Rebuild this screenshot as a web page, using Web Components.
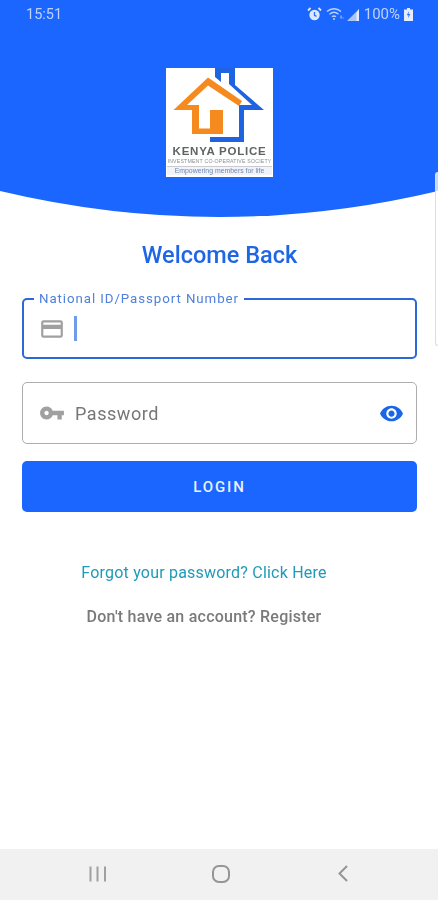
<!DOCTYPE html>
<html lang="en">
<head>
<meta charset="utf-8">
<title>Kenya Police Sacco</title>
<style>
html,body{margin:0;padding:0;background:#fff;font-family:Roboto,"Liberation Sans",sans-serif;}
</style>
</head>
<body>
<login-app>
  <status-bar slot="status"></status-bar>
</login-app>

<script>
const P={
 card:"M20 4H4c-1.11 0-1.99.89-1.99 2L2 18c0 1.11.89 2 2 2h16c1.11 0 2-.89 2-2V6c0-1.11-.89-2-2-2zm0 14H4v-6h16v6zm0-10H4V6h16v2z",
 key:"M12.65 10C11.83 7.67 9.61 6 7 6c-3.31 0-6 2.69-6 6s2.69 6 6 6c2.61 0 4.83-1.67 5.65-4H17v4h4v-4h2v-4H12.65zM7 14c-1.1 0-2-.9-2-2s.9-2 2-2 2 .9 2 2-.9 2-2 2z",
 eye:"M12 4.5C7 4.5 2.73 7.61 1 12c1.73 4.39 6 7.5 11 7.5s9.27-3.11 11-7.5c-1.73-4.39-6-7.5-11-7.5zM12 17c-2.76 0-5-2.24-5-5s2.24-5 5-5 5 2.24 5 5-2.24 5-5 5zm0-8c-1.66 0-3 1.34-3 3s1.34 3 3 3 3-1.34 3-3-1.34-3-3-3z"
};
function def(name,html,init){
  customElements.define(name,class extends HTMLElement{
    constructor(){super();this.attachShadow({mode:"open"}).innerHTML=typeof html==="function"?html(this):html;}
    connectedCallback(){init&&init(this);}
  });
}

def("status-bar",`<style>
:host{display:flex;align-items:center;height:28px;padding:0 25px 0 26px;color:#bdd3fb;font:400 15px Roboto,sans-serif;filter:blur(.45px)}
.t{flex:1;font-size:14.5px}
.i{display:flex;align-items:center}
svg{display:block}
</style>
<span class="t">15:51</span>
<span class="i">
<svg width="15" height="15" viewBox="0 0 15 15" style="margin-right:4px"><circle cx="7.5" cy="8" r="5.2" fill="#dbe7fd"/><path d="M7.5 5v3.3l2 1" stroke="#2a70f5" stroke-width="1.3" fill="none"/><path d="M1 3.5 3.5 1M14 3.5 11.500 1" stroke="#dbe7fd" stroke-width="1.8"/></svg>
<svg width="18" height="14" viewBox="0 0 18 14" style="margin-right:2px" fill="none" stroke="#bdd3fb" stroke-width="1.4"><path d="M1 4.500C5 .8 11 .8 15 4.500M3.500 7.200C6.200 4.800 9.800 4.800 12.500 7.200M6 9.800C7.400 8.700 8.600 8.700 10 9.800"/><circle cx="8" cy="12" r="1" fill="#bdd3fb" stroke="none"/><path d="M15 8.500v3M17 10.500v1" stroke-width="1"/></svg>
<svg width="13" height="13" viewBox="0 0 13 13" style="margin-right:5px"><path d="M13 1V13H1Z" fill="#a9c5fa"/><path d="M10.500 5V13H13V1Z" fill="#e4edff"/></svg>
<span style="margin-right:4px">100%</span>
<svg width="9" height="13" viewBox="0 0 9 13"><path d="M3 0h3v1.500h3V13H0V1.500h3Z" fill="#e4edff"/><path d="M5 3 2.800 7.300h1.700L4 10.500l2.300-4.500H4.600Z" fill="#2a70f5"/></svg>
</span>`);

def("kp-logo",`<style>
:host{display:block;width:107px;height:109px;background:#fff;color:#666;font-family:"Liberation Sans",Arial,sans-serif;text-align:center;overflow:hidden}
svg{display:block}
.a{font:700 11.5px/9px "Liberation Sans",Arial,sans-serif;letter-spacing:.75px;margin-top:4px;color:#5f6364;white-space:nowrap}
.b{font:400 5.200px/6px "Liberation Sans",Arial,sans-serif;color:#8a8d90;margin-top:2px;letter-spacing:.2px;white-space:nowrap}
.c{font:400 6.900px/8px "Liberation Sans",Arial,sans-serif;color:#6c86b4;margin:2px 1px 0;border-top:1px solid #c9cbd0;background:#f1f3f8;white-space:nowrap}
.w{filter:blur(.5px)}
</style>
<div class="w">
<svg width="107" height="75" viewBox="0 0 107 75">
<path fill="#1f63e0" d="M49 0H69V17L98 42H78V74H44V69H73V37H86L63 16V5H55V14L49 9Z"/>
<path fill="#f58a1f" d="M42 9.500 76 33 73 38 42 17.500 21 37H33V60.500H44V42H57V66H26V42H7.500Z"/>
</svg>
<div class="a">KENYA POLICE</div>
<div class="b">INVESTMENT CO-OPERATIVE SOCIETY</div>
<div class="c">Empowering members for life</div>
</div>`);

def("app-header",`<style>
:host{display:block;height:217px;background:#1a66ff;clip-path:path("M0 0H438V191Q219 243 0 191Z")}
.logo{display:flex;justify-content:center;padding:40px 0 0 1px}
</style>
<slot name="status"></slot>
<div class="logo"><kp-logo></kp-logo></div>`);

def("text-field",(el)=>`<style>
:host{display:flex;align-items:center;box-sizing:border-box;height:62px;position:relative;border-radius:5px;background:#fff;padding:0 12px 0 16px;
 border:1.5px solid #adadad}
:host([focused]){border:2px solid #2a6ad8;height:61px;padding-left:15px}
.label{position:absolute;left:10px;top:-9px;padding:0 5px;background:#fff;font:400 13.300px/16px Roboto,sans-serif;letter-spacing:.92px;color:#4f80dc;white-space:nowrap;filter:blur(.25px)}
.icon{display:block;flex:none;width:26px;height:26px;margin-right:10px;fill:#a0a0a0}
.v{flex:1;font:400 18px/24px Roboto,sans-serif;letter-spacing:.55px;color:#777;padding-top:1px;filter:blur(.25px)}
:host([focused]) .v{padding-top:0;filter:none}
.caret{display:block;width:3px;height:25px;background:#6f9be8;margin-left:-1px}
</style>
${el.getAttribute("label")?`<span class="label">${el.getAttribute("label")}</span>`:""}
<svg class="icon" viewBox="0 0 24 24"><path d="${P[el.getAttribute("icon")]}"/></svg>
<div class="v">${el.hasAttribute("focused")?'<span class="caret"></span>':(el.getAttribute("placeholder")||"")}</div>
<slot></slot>`);

def("kp-button",`<style>
:host{display:flex;align-items:center;justify-content:center;height:51px;border-radius:5px;background:#1a66ff;color:#e9f0ff;font:500 15px Roboto,sans-serif;letter-spacing:1.9px}
</style><slot></slot>`);

def("nav-bar",`<style>
:host{display:flex;flex:none;height:51px;background:#f1f1f1;align-items:center;position:relative}
.c{flex:none;display:block}
</style>
<div style="display:flex;width:100%;align-items:center;padding-left:89px;box-sizing:border-box;padding-bottom:2px">
<svg class="c" width="18" height="16" viewBox="0 0 18 16" fill="#a0a0a0"><rect x="0.500" y="0.500" width="2" height="15"/><rect x="7.500" y="0.500" width="2" height="15"/><rect x="15" y="0.500" width="2" height="15"/></svg>
<svg class="c" width="18" height="18" viewBox="0 0 18 18" fill="none" stroke="#959595" stroke-width="2" style="margin-left:105px"><rect x="1" y="1" width="16" height="16" rx="6"/></svg>
<svg class="c" width="10" height="17" viewBox="0 0 10 17" fill="none" stroke="#959595" stroke-width="2" style="margin-left:108px"><path d="M9 1 1.500 8.500 9 16"/></svg>
</div>`);

def("edge-handle",`<style>
:host{position:absolute;top:172px;right:0;width:3.500px;height:174px;box-sizing:border-box;background:linear-gradient(#c8d8f8 0 18px,#fff 18px);border:1px solid #dedede;border-right:0;border-radius:5px 0 0 5px}
</style>`);

def("login-app",`<style>
:host{display:flex;flex-direction:column;width:438px;height:900px;position:relative;overflow:hidden;background:#fff}
main{flex:1;padding:0 21px 0 22px;display:flex;flex-direction:column}
h1{margin:24px 0 29px;text-align:center;font:500 23.500px/28px Roboto,sans-serif;color:#1f66e5;filter:blur(.25px)}
text-field+text-field{margin-top:23px}
kp-button{margin-top:17px}
.links{display:flex;flex-direction:column;align-items:center;padding-right:31px;margin-top:51px;filter:blur(.3px)}
.f{font:400 16px/20px Roboto,sans-serif;color:#1f9ab8;letter-spacing:.21px}
.r{font:500 16px/20px Roboto,sans-serif;color:#7a7a7a;margin-top:24px;letter-spacing:.23px}
.eye{display:block;width:25px;height:25px;fill:#1a66e6;flex:none}
</style>
<app-header><slot name="status" slot="status"></slot></app-header>
<main>
<h1>Welcome Back</h1>
<text-field focused icon="card" label="National ID/Passport Number"></text-field>
<text-field icon="key" placeholder="Password"><svg class="eye" viewBox="0 0 24 24"><path d="${P.eye}"/></svg></text-field>
<kp-button>LOGIN</kp-button>
<div class="links"><span class="f">Forgot your password? Click Here</span><span class="r">Don't have an account? Register</span></div>
</main>
<nav-bar></nav-bar>
<edge-handle></edge-handle>`);
</script>
</body>
</html>
